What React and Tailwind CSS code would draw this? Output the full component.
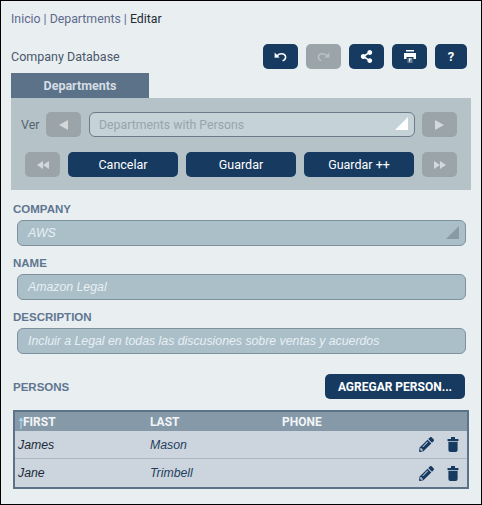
import React from "react";
import { FaPencilAlt, FaShareAlt } from "react-icons/fa";

const navy = "h-[25px] flex items-center justify-center rounded-[5px] bg-[#163a60] text-white";
const grey = "h-[25px] flex items-center justify-center rounded-[5px] bg-[#9aa4a9]";
const label = "font-['Liberation_Sans',sans-serif] text-[11.5px] leading-[14px] font-bold text-[#5f7690]";
const field = "h-[26px] flex items-center px-[10px] rounded-[6px] border border-[#7d919f] bg-[#abbfc9] text-[#e8eff3] italic font-['Liberation_Sans',sans-serif] text-[12.3px]";

function UndoIcon({ flip, color }) {
  return (
    <svg width="13" height="11" viewBox="0 0 13 11" className={flip ? "-scale-x-100" : ""}>
      <path d="M3 5.2 C4.5 2.5 10 1.6 11.4 5 C12.2 7.2 10.6 9.2 8.6 9.8" fill="none" stroke={color} strokeWidth="1.6" />
      <path d="M0.6 1.6 L5.6 6.4 L0.6 6.8 Z" fill={color} />
    </svg>
  );
}

function PrintIcon() {
  return (
    <svg width="12" height="13" viewBox="0 0 12 13" fill="white">
      <rect x="2" y="0" width="8" height="1.5" />
      <rect x="0" y="3" width="12" height="6" />
      <rect x="2.5" y="7" width="7" height="6" fill="#163a60" />
      <rect x="3.5" y="8" width="5" height="5" fill="white" opacity="0.35" />
      <rect x="5" y="8.5" width="1" height="3" />
      <rect x="5" y="8.5" width="2.5" height="1" />
    </svg>
  );
}

function Triangle({ right, size = 9 }) {
  return (
    <svg width={size} height={size + 1} viewBox="0 0 9 10" fill="#d3d8da" className={right ? "" : "-scale-x-100"}>
      <path d="M0 0 L9 5 L0 10 Z" />
    </svg>
  );
}

function DoubleTriangle({ right }) {
  return (
    <svg width="12" height="8" viewBox="0 0 12 8" fill="#d3d8da" className={right ? "" : "-scale-x-100"}>
      <path d="M0 0 L6 4 L0 8 Z M6 0 L12 4 L6 8 Z" />
    </svg>
  );
}

function TrashIcon() {
  return (
    <svg width="12" height="15" viewBox="0 0 12 15" fill="#163a60">
      <rect x="4" y="0" width="4" height="2" />
      <rect x="0.5" y="2" width="11" height="2.2" rx="0.6" />
      <path d="M1.4 5 H10.6 V13 Q10.6 15 8.6 15 H3.4 Q1.4 15 1.4 13 Z" />
    </svg>
  );
}

function SortArrow() {
  return (
    <svg width="6" height="12" viewBox="0 0 6 12" className="mr-[-1px] mt-[2px]">
      <path d="M3 1 V12" stroke="#a8d4ee" strokeWidth="1.2" />
      <path d="M0.5 4 L3 0.5 L5.5 4 Z" fill="#a8d4ee" />
    </svg>
  );
}

function PersonRow({ first, last, border }) {
  return (
    <div className={`h-[28px] flex items-center bg-[#ccd5dd] italic font-['Liberation_Sans',sans-serif] text-[12.3px] ${border ? "border-b border-[#a9bac3]" : ""}`}>
      <span className="w-[135px] pl-[3px] pt-px text-[#1d2a3a]">{first}</span>
      <span className="w-[132px] pt-px text-[#263f5e]">{last}</span>
      <span className="flex-1" />
      <FaPencilAlt className="text-[#163a60] text-[15px]" />
      <span className="ml-[13px] mr-[8px] flex"><TrashIcon /></span>
    </div>
  );
}

export default function App() {
  return (
    <div className="w-[482px] h-[505px] border border-black bg-[#e9eef1] font-['Roboto',sans-serif] text-[12.5px] overflow-hidden">
      <div className="pl-[10px] pt-[11px] h-[43px] leading-[14px] text-[12.3px] text-[#5d6a8c]">
        Inicio | Departments | <span className="text-[#222b36]">Editar</span>
      </div>

      <div className="h-[25px] flex items-center pl-[10px] pr-[14px]">
        <span className="pt-px text-[#4a586b]">Company Database</span>
        <div className="ml-auto flex gap-[8px]">
          <button className={`${navy} w-[35px]`}><UndoIcon color="white" /></button>
          <button className={`${grey} w-[35px]`}><UndoIcon flip color="#b9c1c5" /></button>
          <button className={`${navy} w-[35px]`}><FaShareAlt className="text-white text-[13px]" /></button>
          <button className={`${navy} w-[35px]`}><PrintIcon /></button>
          <button className={`${navy} w-[32px] font-bold text-[13px]`}>?</button>
        </div>
      </div>

      <div className="ml-[10px] mt-[4px] w-[138px] h-[25px] pt-px flex items-center justify-center bg-[#5b7288] text-[#d5dee5] font-bold">
        Departments
      </div>

      <div className="mx-[10px] h-[92px] bg-[#b5c2c8] pt-[14px]">
        <div className="flex items-center h-[25px] pl-[10px]">
          <span className="w-[25px] pt-px text-[#55646f]">Ver</span>
          <button className={`${grey} w-[35px]`}><Triangle /></button>
          <div className="relative ml-[8px] w-[326px] h-[25px] pt-px flex items-center px-[9px] rounded-[6px] border border-[#6b7b8a] bg-[#c5d2d8] text-[12.3px] text-[#98a5ab]">
            Departments with Persons
            <div className="absolute right-[6px] bottom-[6px] w-0 h-0 border-t-[13px] border-t-transparent border-r-[13px] border-r-white" />
          </div>
          <button className={`${grey} ml-[7px] w-[35px]`}><Triangle right /></button>
        </div>
        <div className="flex items-center h-[25px] mt-[15px] pl-[14px] gap-[8px]">
          <button className={`${grey} w-[35px]`}><DoubleTriangle /></button>
          <button className={`${navy} w-[110px] pt-px`}>Cancelar</button>
          <button className={`${navy} w-[110px] pt-px`}>Guardar</button>
          <button className={`${navy} w-[110px] pt-px`}>Guardar ++</button>
          <button className={`${grey} w-[35px]`}><DoubleTriangle right /></button>
        </div>
      </div>

      <div className="pl-[12px] mt-[12px]"><div className={label}>COMPANY</div></div>
      <div className={`relative ml-[16px] mt-[4px] w-[449px] ${field}`}>
        AWS
        <div className="absolute right-[6px] bottom-[6px] w-0 h-0 border-t-[13px] border-t-transparent border-r-[13px] border-r-[#8a9aa5]" />
      </div>

      <div className="pl-[12px] mt-[10px]"><div className={label}>NAME</div></div>
      <div className={`ml-[16px] mt-[4px] w-[449px] ${field}`}>Amazon Legal</div>

      <div className="pl-[12px] mt-[10px]"><div className={label}>DESCRIPTION</div></div>
      <div className={`ml-[16px] mt-[4px] w-[449px] ${field}`}>Incluir a Legal en todas las discusiones sobre ventas y acuerdos</div>

      <div className="flex items-center h-[25px] mt-[20px] pl-[12px] pr-[16px]">
        <span className={label}>PERSONS</span>
        <button className={`${navy} ml-auto w-[140px] font-['Roboto',sans-serif] font-bold text-[12px]`}>AGREGAR PERSON...</button>
      </div>

      <div className="ml-[12px] mt-[11px] w-[456px] border-2 border-[#5b7288]">
        <div className="h-[19px] flex items-center bg-[#8699a8] text-[#f2f5f7] font-bold font-['Roboto',sans-serif] text-[12px]">
          <span className="w-[135px] pl-[3px] flex items-center"><SortArrow />FIRST</span>
          <span className="w-[132px]">LAST</span>
          <span>PHONE</span>
        </div>
        <PersonRow first="James" last="Mason" border />
        <PersonRow first="Jane" last="Trimbell" />
      </div>
    </div>
  );
}
